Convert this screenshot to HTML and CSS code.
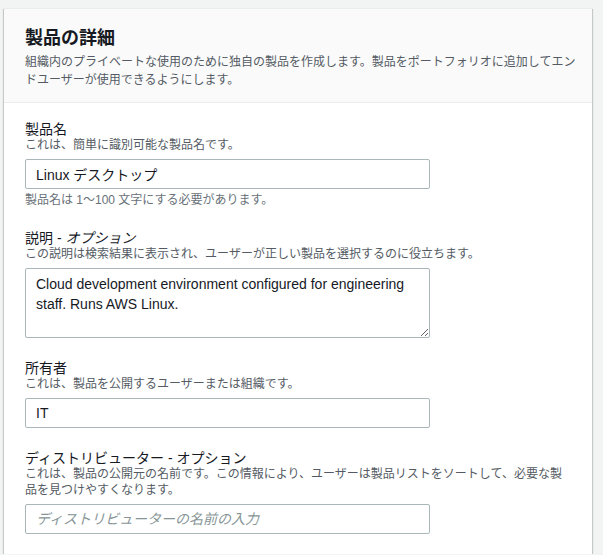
FILE: index.html
```html
<!DOCTYPE html>
<html lang="ja">
<head>
  <meta charset="UTF-8" />
  <meta name="viewport" content="width=device-width, initial-scale=1.0"/>
  <title>製品の詳細</title>
  <link rel="stylesheet" href="styles.css">
</head>
<body>
  <div class="container">
    <!-- Header -->
    <div class="container-header">
      <h2>製品の詳細</h2>
      <p class="header-desc">組織内のプライベートな使用のために独自の製品を作成します。製品をポートフォリオに追加してエンドユーザーが使用できるようにします。</p>
    </div>

    <div class="container-body">
      <!-- Product name -->
      <div class="field">
        <label for="productName">製品名</label>
        <p class="field-desc">これは、簡単に識別可能な製品名です。</p>
        <input type="text" id="productName" value="Linux デスクトップ">
        <p class="constraint">製品名は 1〜100 文字にする必要があります。</p>
      </div>

      <!-- Description -->
      <div class="field">
        <label for="description">説明 - <i>オプション</i></label>
        <p class="field-desc">この説明は検索結果に表示され、ユーザーが正しい製品を選択するのに役立ちます。</p>
        <textarea id="description">Cloud development environment configured for engineering staff. Runs AWS Linux.</textarea>
      </div>

      <!-- Owner -->
      <div class="field">
        <label for="owner">所有者</label>
        <p class="field-desc">これは、製品を公開するユーザーまたは組織です。</p>
        <input type="text" id="owner" value="IT">
      </div>

      <!-- Distributor -->
      <div class="field">
        <label for="distributor">ディストリビューター - オプション</label>
        <p class="field-desc">これは、製品の公開元の名前です。この情報により、ユーザーは製品リストをソートして、必要な製品を見つけやすくなります。</p>
        <input type="text" id="distributor" placeholder="ディストリビューターの名前の入力">
      </div>
    </div>
  </div>
</body>
</html>
```

FILE: styles.css
```css
* {
  margin: 0;
  padding: 0;
  box-sizing: border-box;
  font-family: "Liberation Sans", "Noto Sans CJK JP", sans-serif;
}
body {
  background: #f2f3f3;
  padding: 8px 11px 0 4px;
  color: #16191f;
}
.container {
  background: #ffffff;
  border-top: 1px solid #eaeded;
  box-shadow: 0 1px 1px 0 rgba(0, 28, 36, 0.3),
              1px 1px 1px 0 rgba(0, 28, 36, 0.15),
              -1px 1px 1px 0 rgba(0, 28, 36, 0.15);
}
.container-header {
  background: #fafafa;
  border-bottom: 1px solid #eaeded;
  padding: 18px 12px 13px 21px;
}
h2 {
  font-size: 18px;
  line-height: 22px;
  font-weight: 700;
  margin-bottom: 4px;
}
.header-desc {
  font-size: 12px;
  line-height: 18px;
  color: #545b64;
}
.container-body {
  padding: 18px 20px 20px 21px;
  display: flex;
  flex-direction: column;
  gap: 22px;
}
.field label {
  display: block;
  font-size: 14px;
  line-height: 16px;
}
.field label i {
  font-style: italic;
}
.field-desc {
  font-size: 12px;
  line-height: 16px;
  color: #545b64;
}
input, textarea {
  display: block;
  width: 405px;
  margin-top: 6px;
  border: 1px solid #aab7b8;
  border-radius: 2px;
  padding: 4px 10px;
  font-size: 14px;
  line-height: 20px;
  color: #16191f;
  background: #ffffff;
}
input {
  height: 30px;
}
textarea {
  height: 70px;
  padding: 5px 10px;
  resize: vertical;
}
input::placeholder {
  color: #879596;
  font-style: italic;
}
.constraint {
  font-size: 12px;
  line-height: 16px;
  margin-top: 3px;
  color: #687078;
}
```
